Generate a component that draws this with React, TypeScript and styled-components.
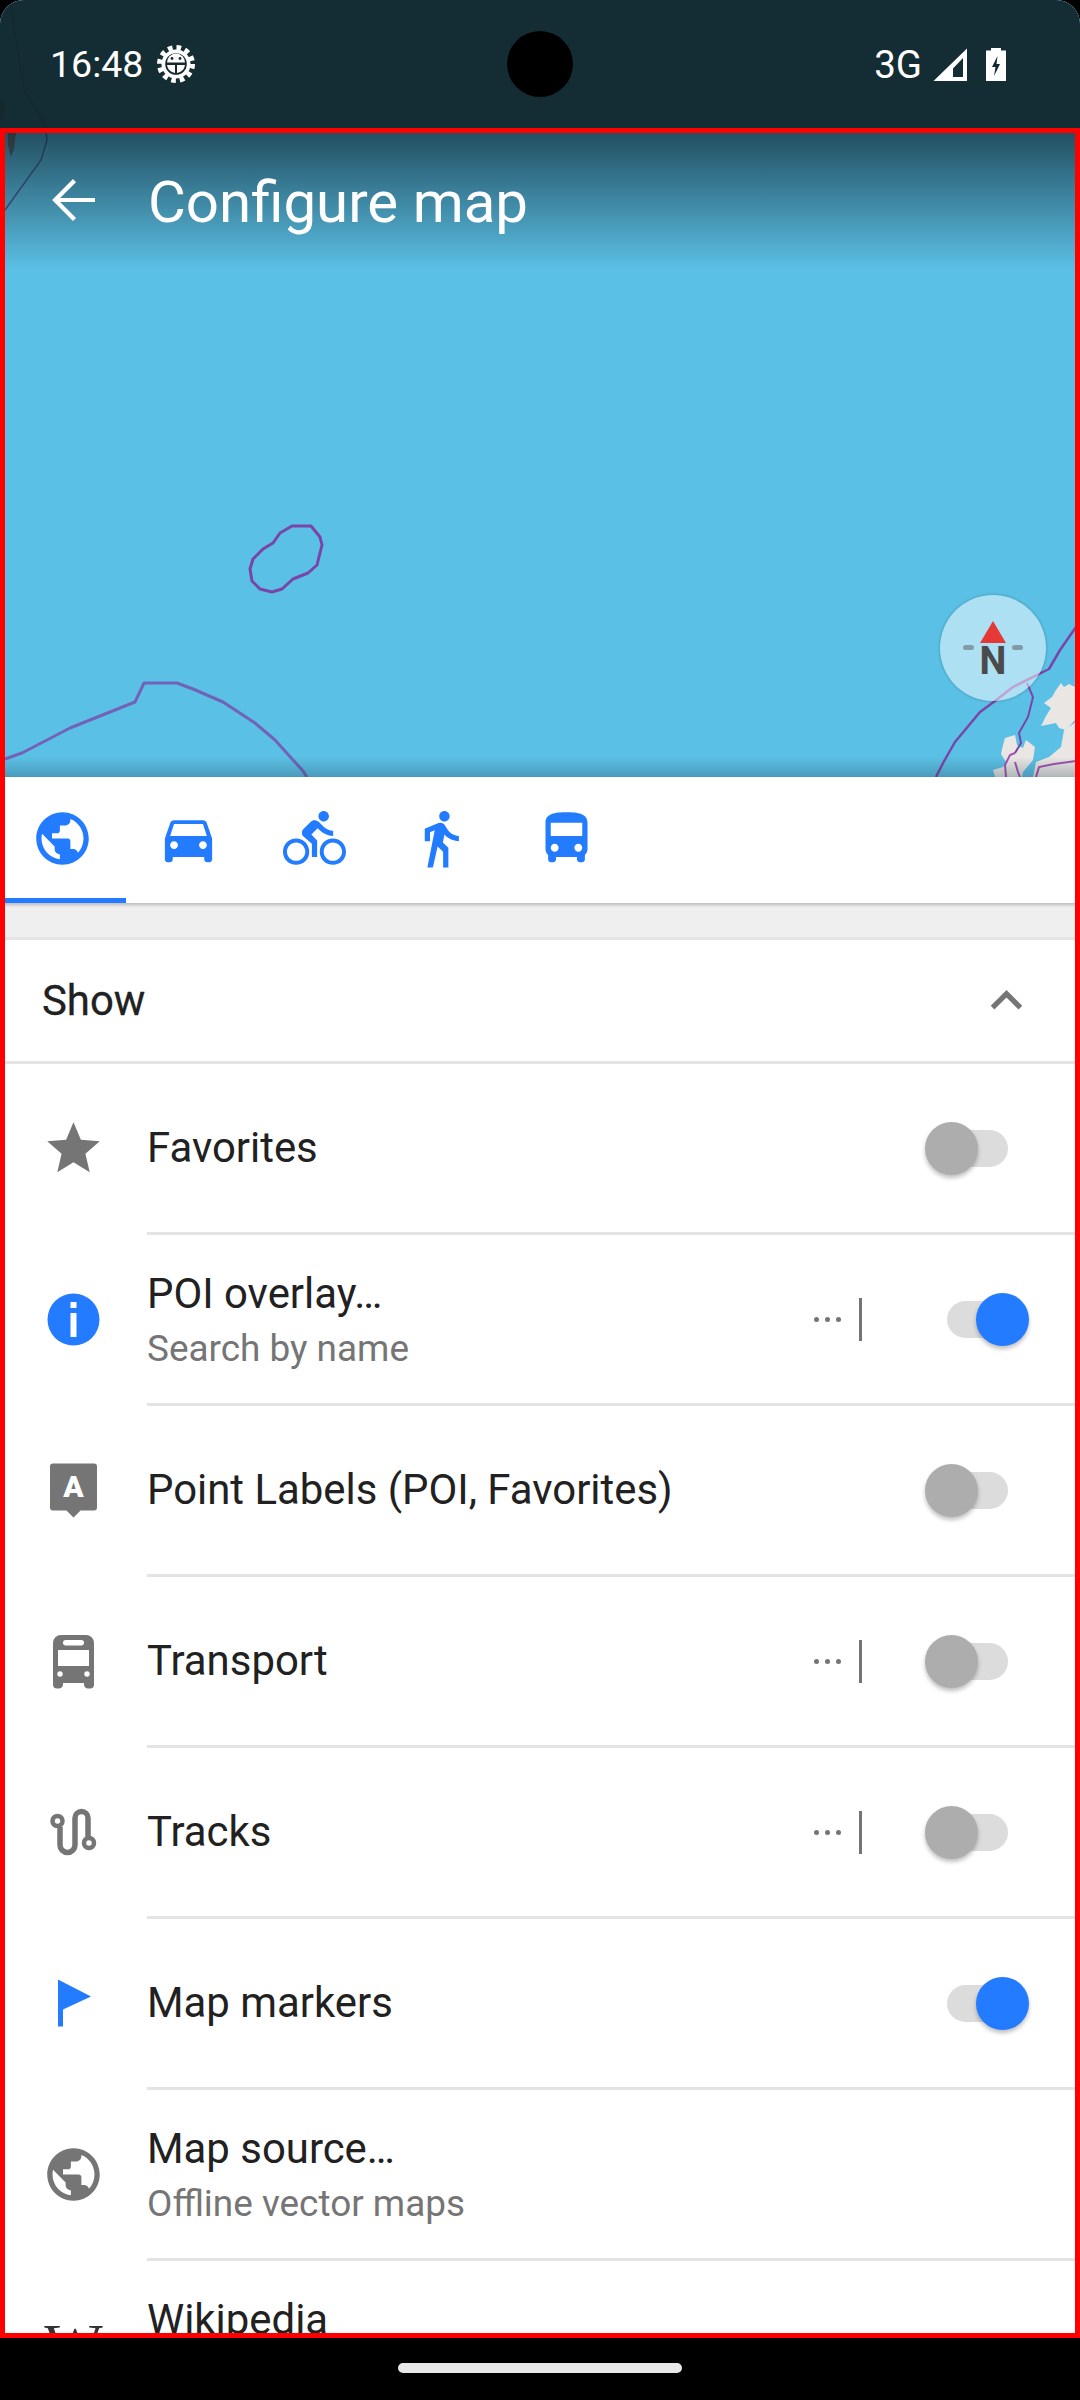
import { ReactNode } from 'react';
import styled, { createGlobalStyle } from 'styled-components';

const BLUE = '#237bff';
const GREY = '#757575';

const GlobalStyle = createGlobalStyle`
  html, body {
    margin: 0;
    padding: 0;
    background: #000;
  }
  body {
    font-family: Roboto, "Liberation Sans", sans-serif;
  }
`;

// page shell
const Screen = styled.div`
  position: relative;
  width: 1080px;
  height: 2400px;
  overflow: hidden;
  background: #000;
  display: flex;
  flex-direction: column;
`;

const Content = styled.div`
  height: 2333px;
  flex: none;
  overflow: hidden;
  background: #fff;
  border-radius: 24px 24px 0 0;
  display: flex;
  flex-direction: column;
`;

const DebugFrame = styled.div`
  position: absolute;
  top: 128px;
  left: 0;
  width: 1080px;
  height: 2210px;
  box-sizing: border-box;
  border: 5px solid #ff0000;
  pointer-events: none;
`;

const NavBar = styled.div`
  flex: 1;
  display: flex;
  align-items: flex-end;
  justify-content: center;
  padding-bottom: 27px;
`;

const NavPill = styled.div`
  width: 284px;
  height: 10px;
  border-radius: 5px;
  background: #e8e8e8;
`;

// map
const MapArea = styled.div`
  position: relative;
  flex: none;
  height: 777px;
  background: #5bc0e5;
  display: flex;
  flex-direction: column;

  &::after {
    content: '';
    position: absolute;
    left: 0;
    right: 0;
    bottom: 0;
    height: 20px;
    background: linear-gradient(to bottom, rgba(30, 60, 80, 0), rgba(30, 60, 80, 0.28));
  }
`;

const MapCanvas = styled.svg`
  position: absolute;
  top: 0;
  left: 0;
`;

const StatusBar = styled.div`
  position: relative;
  flex: none;
  height: 128px;
  padding: 0 74px 0 50px;
  box-sizing: border-box;
  background: rgba(18, 37, 44, 0.96);
  display: flex;
  align-items: center;
  color: #fff;
  font-size: 38.5px;
`;

const StatusTime = styled.span`
  margin-right: 14px;
  font-size: 37.5px;
`;

const StatusRight = styled.div`
  margin-left: auto;
  display: flex;
  align-items: center;
  gap: 11px;
`;

const BatterySlot = styled.div`
  margin-left: 8px;
`;

const Punch = styled.div`
  position: absolute;
  left: 507px;
  top: 31px;
  width: 66px;
  height: 66px;
  border-radius: 50%;
  background: #000;
`;

const Toolbar = styled.div`
  position: relative;
  flex: none;
  height: 142px;
  box-sizing: border-box;
  padding: 2px 0 0 40px;
  background: linear-gradient(to bottom, rgba(10, 30, 40, 0.72), rgba(10, 30, 40, 0));
  display: flex;
  align-items: center;
  gap: 42px;
  color: #fff;
`;

const ToolbarTitle = styled.div`
  font-size: 58.2px;
  line-height: 66px;
  margin-top: 4px;
`;

const Compass = styled.div`
  position: absolute;
  left: 940px;
  top: 595px;
  width: 106px;
  height: 106px;
  border-radius: 50%;
  background: rgba(255, 255, 255, 0.5);
  box-shadow: 0 0 3px rgba(0, 0, 0, 0.3);
`;

const CompassIcon = styled.svg`
  display: block;
`;

// tabs
const TabBar = styled.div`
  position: relative;
  flex: none;
  height: 126px;
  background: #fff;
  display: flex;
  box-shadow: 0 2px 3px rgba(0, 0, 0, 0.22);
`;

const Tab = styled.div<{ $active?: boolean }>`
  width: 126px;
  box-sizing: border-box;
  padding: 30px 2px 0 0;
  display: flex;
  justify-content: center;
  align-items: flex-start;
  border-bottom: 5px solid ${(p) => (p.$active ? BLUE : 'transparent')};
`;

const Icon = styled.svg`
  display: block;
  flex: none;
`;

const Band = styled.div`
  flex: none;
  height: 34px;
  background: #efefef;
  border-bottom: 3px solid #e4e4e4;
`;

// list
const SectionHeader = styled.div`
  flex: none;
  height: 121px;
  padding: 0 42px 0 42px;
  display: flex;
  align-items: center;
  justify-content: space-between;
  border-bottom: 3px solid #e4e4e4;
  font-size: 41.9px;
  color: #212121;
  -webkit-text-stroke: 0.3px #212121;
`;

const Row = styled.div`
  flex: none;
  height: 168px;
  display: flex;
  align-items: center;
`;

const Divider = styled.div`
  flex: none;
  height: 3px;
  margin-left: 147px;
  background: #e4e4e4;
`;

const IconSlot = styled.div`
  width: 147px;
  flex: none;
  display: flex;
  justify-content: center;
  align-items: center;
`;

const TextBlock = styled.div`
  flex: 1;
  min-width: 0;
`;

const Title = styled.div`
  font-size: 41.9px;
  line-height: 52px;
  color: #212121;
`;

const Sub = styled.div`
  font-size: 36.9px;
  line-height: 50px;
  margin: 4px 0 -4px;
  color: ${GREY};
`;

const WikiMark = styled.span`
  font-family: "Liberation Serif", serif;
  font-size: 62px;
  line-height: 63px;
  color: #333;
`;

const More = styled.div`
  display: flex;
  align-items: center;
  gap: 6px;
  width: 50px;
  height: 43px;
  margin-right: 63px;
  box-sizing: border-box;
  padding-left: 2px;
  border-right: 3px solid ${GREY};
`;

const MoreDot = styled.span`
  width: 5px;
  height: 5px;
  border-radius: 50%;
  background: ${GREY};
`;

const Switch = styled.div<{ $on?: boolean }>`
  position: relative;
  width: 104px;
  height: 53px;
  margin-right: 51px;
  flex: none;

  &::before {
    content: '';
    position: absolute;
    left: 22px;
    top: 8px;
    width: 61px;
    height: 37px;
    border-radius: 19px;
    background: #dcdcdc;
  }

  &::after {
    content: '';
    position: absolute;
    left: ${(p) => (p.$on ? '51px' : '0')};
    top: 0;
    width: 53px;
    height: 53px;
    border-radius: 50%;
    background: ${(p) => (p.$on ? BLUE : '#adadad')};
    box-shadow: 0 3px 4px rgba(0, 0, 0, 0.25);
  }
`;

const PUBLIC_D =
  'M12 2C6.48 2 2 6.48 2 12s4.48 10 10 10 10-4.48 10-10S17.52 2 12 2zm-1 17.93c-3.95-.49-7-3.85-7-7.93 0-.62.08-1.21.21-1.79L9 15v1c0 1.1.9 2 2 2v1.93zm6.9-2.54c-.26-.81-1-1.39-1.9-1.39h-1v-3c0-.55-.45-1-1-1H8v-2h2c.55 0 1-.45 1-1V7h2c1.1 0 2-.9 2-2v-.41c2.93 1.19 5 4.06 5 7.41 0 2.08-.8 3.97-2.1 5.39z';
const CAR_D =
  'M18.92 6.01C18.72 5.42 18.16 5 17.5 5h-11c-.66 0-1.21.42-1.42 1.01L3 12v8c0 .55.45 1 1 1h1c.55 0 1-.45 1-1v-1h12v1c0 .55.45 1 1 1h1c.55 0 1-.45 1-1v-8l-2.08-5.99zM6.5 16c-.83 0-1.5-.67-1.5-1.5S5.67 13 6.5 13s1.5.67 1.5 1.5S7.33 16 6.5 16zm11 0c-.83 0-1.5-.67-1.5-1.5s.67-1.5 1.5-1.5 1.5.67 1.5 1.5-.67 1.5-1.5 1.5zM5 11l1.5-4.5h11L19 11H5z';
const BIKE_D =
  'M15.5 5.5c1.1 0 2-.9 2-2s-.9-2-2-2-2 .9-2 2 .9 2 2 2zM5 12c-2.8 0-5 2.2-5 5s2.2 5 5 5 5-2.2 5-5-2.2-5-5-5zm0 8.5c-1.9 0-3.5-1.6-3.5-3.5s1.6-3.5 3.5-3.5 3.5 1.6 3.5 3.5-1.6 3.5-3.5 3.5zm5.8-10l2.4-2.4.8.8c1.3 1.3 3 2.1 5.1 2.1V9c-1.5 0-2.7-.6-3.6-1.5l-1.9-1.9c-.5-.4-1-.6-1.6-.6s-1.1.2-1.4.6L7.8 8.4c-.4.4-.6.9-.6 1.4 0 .6.2 1.1.6 1.4L11 14v5h2v-6.2l-2.2-2.3zM19 12c-2.8 0-5 2.2-5 5s2.2 5 5 5 5-2.2 5-5-2.2-5-5-5zm0 8.5c-1.9 0-3.5-1.6-3.5-3.5s1.6-3.5 3.5-3.5 3.5 1.6 3.5 3.5-1.6 3.5-3.5 3.5z';
const WALK_D =
  'M13.5 5.5c1.1 0 2-.9 2-2s-.9-2-2-2-2 .9-2 2 .9 2 2 2zM9.8 8.9L7 23h2.1l1.8-8 2.1 2v6h2v-7.5l-2.1-2 .6-3C14.8 12 16.8 13 19 13v-2c-1.9 0-3.5-1-4.3-2.4l-1-1.6c-.4-.6-1-1-1.7-1-.3 0-.5.1-.8.1L6 8.3V13h2V9.6l1.8-.7';
const BUS_D =
  'M4 16c0 .88.39 1.67 1 2.22V20c0 .55.45 1 1 1h1c.55 0 1-.45 1-1v-1h8v1c0 .55.45 1 1 1h1c.55 0 1-.45 1-1v-1.78c.61-.55 1-1.34 1-2.22V6c0-3.5-3.58-4-8-4s-8 .5-8 4v10zm3.5 1c-.83 0-1.5-.67-1.5-1.5S6.67 14 7.5 14s1.5.67 1.5 1.5S8.33 17 7.5 17zm9 0c-.83 0-1.5-.67-1.5-1.5s.67-1.5 1.5-1.5 1.5.67 1.5 1.5-.67 1.5-1.5 1.5zm1.5-6H6V6h12v5z';

function Glyph({ d, color = GREY, size = 63 }: { d: string; color?: string; size?: number }) {
  return (
    <Icon width={size} height={size} viewBox="0 0 24 24" fill={color}>
      <path d={d} />
    </Icon>
  );
}

function StarIcon() {
  return <Glyph d="M12 17.27L18.18 21l-1.64-7.03L22 9.24l-7.19-.61L12 2 9.19 8.63 2 9.24l5.46 4.73L5.82 21z" />;
}

function InfoIcon() {
  return (
    <Icon width={63} height={63} viewBox="0 0 63 63">
      <circle cx="31.5" cy="31.5" r="26" fill={BLUE} />
      <rect x="28.5" y="14" width="6" height="6" fill="#fff" />
      <rect x="28.5" y="25" width="6" height="24" fill="#fff" />
    </Icon>
  );
}

function LabelIcon() {
  return (
    <Icon width={63} height={63} viewBox="0 0 63 63">
      <path
        d="M11 4.5h41a3 3 0 0 1 3 3v41a3 3 0 0 1-3 3H38.5l-7 7-7-7H11a3 3 0 0 1-3-3v-41a3 3 0 0 1 3-3z"
        fill={GREY}
      />
      <text x="31.5" y="38" textAnchor="middle" fontFamily="Roboto, sans-serif" fontWeight="900" fontSize="30" fill="#fff">
        A
      </text>
    </Icon>
  );
}

function TransportIcon() {
  return (
    <Icon width={63} height={63} viewBox="0 0 63 63">
      <path
        d="M19 5h25a8 8 0 0 1 8 8v42a4 4 0 0 1-4 3.5h-2a4.500 4.500 0 0 1-4-3.500V53H21v2a4.500 4.500 0 0 1-4 3.500h-2a4 4 0 0 1-4-3.500V13a8 8 0 0 1 8-8z"
        fill={GREY}
      />
      <rect x="21" y="10" width="21" height="5.500" rx="2.700" fill="#fff" />
      <rect x="16" y="20" width="31" height="16" fill="#fff" />
      <circle cx="18" cy="44" r="2.700" fill="#fff" />
      <circle cx="45" cy="44" r="2.700" fill="#fff" />
    </Icon>
  );
}

function TracksIcon() {
  return (
    <Icon width={63} height={63} viewBox="0 0 63 63" fill="none" stroke={GREY}>
      <path d="M18 26V44a7.500 7.500 0 0 0 15 0V17a6.500 6.500 0 0 1 13 0V36" strokeWidth="5.500" />
      <circle cx="15.500" cy="20" r="5" strokeWidth="4.500" fill="#fff" />
      <circle cx="47" cy="42" r="5" strokeWidth="4.500" fill="#fff" />
    </Icon>
  );
}

function FlagIcon() {
  return (
    <Icon width={63} height={63} viewBox="0 0 63 63">
      <path d="M16 7.500L49 24.500 21 37.500V54.500H16z" fill={BLUE} />
    </Icon>
  );
}

function GearIcon() {
  return (
    <Icon width={38} height={38} viewBox="0 0 38 38">
      <circle cx="19" cy="19" r="16.500" fill="none" stroke="#fff" strokeWidth="5" strokeDasharray="4.600 4.040" />
      <circle cx="19" cy="19" r="14.500" fill="#fff" />
      <circle cx="19" cy="19" r="10.800" fill="#14282f" />
      <path d="M10 17.500a9 9 0 0 1 18 0z" fill="#fff" />
      <circle cx="15" cy="13.500" r="1.400" fill="#14282f" />
      <circle cx="23" cy="13.500" r="1.400" fill="#14282f" />
      <path d="M10 20h8v8a9.500 9.500 0 0 1-8-8zM20 20h8a9.500 9.500 0 0 1-8 8z" fill="#fff" />
    </Icon>
  );
}

function SignalIcon() {
  return (
    <Icon width={34} height={33} viewBox="0 0 34 33">
      <path d="M34 0.500V33H0.500zM20 20.500L30 10V29H20z" fill="#fff" fillRule="evenodd" />
    </Icon>
  );
}

function BatteryIcon() {
  return (
    <Icon width={20} height={33} viewBox="0 0 20 33">
      <path d="M5 0h10v2.500h5V33H0V2.500h5z" fill="#fff" />
      <path d="M11.500 8L6 19h3.500L8 28l6-12h-3.500z" fill="#14282f" />
    </Icon>
  );
}

function ArrowBack() {
  return (
    <Icon width={66} height={66} viewBox="0 0 24 24" fill="#fff">
      <path d="M20 11.300H7.300l5.800-5.800L12 4.400 4.400 12l7.600 7.600 1.100-1.100-5.800-5.800H20z" />
    </Icon>
  );
}

function MapLines() {
  return (
    <MapCanvas width={1080} height={777} viewBox="0 0 1080 777" fill="none">
      <path d="M0 100l6 6-3 12-3 2zM8 133h8l-2 16-3 8-3-12z" fill="#6d6d6d" />
      <path d="M10 0L24 90 45 123 47 140 41 160 5 210" stroke="#45437d" strokeWidth="1.500" opacity="0.8" />
      <g fill="#e9e6e3">
        <path d="M1061 683l3 4 5-3 6 3v33l-9 10-7-2-3-5-15 3 5-10 5-8-7-5 8-6 4-7z" />
        <path d="M1076 722v55h-43l3-15 13-5 12-10 3-17z" />
        <path d="M1005 738l10-3 2 10 6 3 3-8 9 7-2 13-10 12-1 5h-27l-2-7 10-3 3-5-5-8 2-9z" />
      </g>
      <g stroke="#7a45a8" strokeWidth="3" strokeLinejoin="round">
        <path d="M292 526H311L320 537 322 545 317 565 308 573 293 579 282 589 272 592 260 589 252 581 250 569 253 559 263 549 273 543 280 533z" />
        <path d="M5 759L22 753 70 728 135 702 144 683H177L193 689 223 702 255 723 275 740 303 771 307 777" stroke="#7363b8" />
        <path d="M1076 627L1060 650 1049 669 1037 675 1013 687 995 701 980 712 955 742 943 763 936 777" strokeWidth="2.500" />
      </g>
      <g stroke="#a452b0" strokeWidth="2">
        <path d="M1027 683L1033 697 1028 717 1019 733 1021 743 1015 753" stroke="#7a45a8" />
        <path d="M1015 753L1010 755 1005 765 1006 777M1015 762l3 10 2 5M1036 777l3-10 15-3 22-3" />
      </g>
    </MapCanvas>
  );
}

type ItemProps = {
  icon: ReactNode;
  title: string;
  sub?: string;
  more?: boolean;
  on?: boolean;
  noSwitch?: boolean;
};

function Item({ icon, title, sub, more, on, noSwitch }: ItemProps) {
  return (
    <Row>
      <IconSlot>{icon}</IconSlot>
      <TextBlock>
        <Title>{title}</Title>
        {sub && <Sub>{sub}</Sub>}
      </TextBlock>
      {more && (
        <More>
          <MoreDot />
          <MoreDot />
          <MoreDot />
        </More>
      )}
      {!noSwitch && <Switch $on={on} />}
    </Row>
  );
}

export default function App() {
  return (
    <Screen>
      <GlobalStyle />
      <Content>
        <MapArea>
          <MapLines />
          <StatusBar>
            <StatusTime>16:48</StatusTime>
            <GearIcon />
            <Punch />
            <StatusRight>
              <span>3G</span>
              <SignalIcon />
              <BatterySlot>
                <BatteryIcon />
              </BatterySlot>
            </StatusRight>
          </StatusBar>
          <Toolbar>
            <ArrowBack />
            <ToolbarTitle>Configure map</ToolbarTitle>
          </Toolbar>
          <Compass>
            <CompassIcon width={106} height={106} viewBox="0 0 106 106">
              <path d="M53 26L66 48H40z" fill="#e53935" />
              <rect x="23" y="50" width="11" height="5" rx="2.500" fill="#7f9ca8" />
              <rect x="72" y="50" width="11" height="5" rx="2.500" fill="#7f9ca8" />
              <text x="53" y="79" textAnchor="middle" fontFamily="Roboto, sans-serif" fontWeight="700" fontSize="38" fill="#4a4a4a">
                N
              </text>
            </CompassIcon>
          </Compass>
        </MapArea>
        <TabBar>
          <Tab $active>
            <Glyph d={PUBLIC_D} color={BLUE} />
          </Tab>
          <Tab>
            <Glyph d={CAR_D} color={BLUE} />
          </Tab>
          <Tab>
            <Glyph d={BIKE_D} color={BLUE} />
          </Tab>
          <Tab>
            <Glyph d={WALK_D} color={BLUE} />
          </Tab>
          <Tab>
            <Glyph d={BUS_D} color={BLUE} />
          </Tab>
        </TabBar>
        <Band />
        <SectionHeader>
          <span>Show</span>
          <Glyph d="M12 8l-6 6 1.410 1.410L12 10.830l4.590 4.580L18 14z" />
        </SectionHeader>
        <Item icon={<StarIcon />} title="Favorites" />
        <Divider />
        <Item icon={<InfoIcon />} title="POI overlay…" sub="Search by name" more on />
        <Divider />
        <Item icon={<LabelIcon />} title="Point Labels (POI, Favorites)" />
        <Divider />
        <Item icon={<TransportIcon />} title="Transport" more />
        <Divider />
        <Item icon={<TracksIcon />} title="Tracks" more />
        <Divider />
        <Item icon={<FlagIcon />} title="Map markers" on />
        <Divider />
        <Item icon={<Glyph d={PUBLIC_D} />} title="Map source…" sub="Offline vector maps" noSwitch />
        <Divider />
        <Item icon={<WikiMark>W</WikiMark>} title="Wikipedia" sub={'\u00a0'} noSwitch />
      </Content>
      <NavBar>
        <NavPill />
      </NavBar>
      <DebugFrame />
    </Screen>
  );
}
